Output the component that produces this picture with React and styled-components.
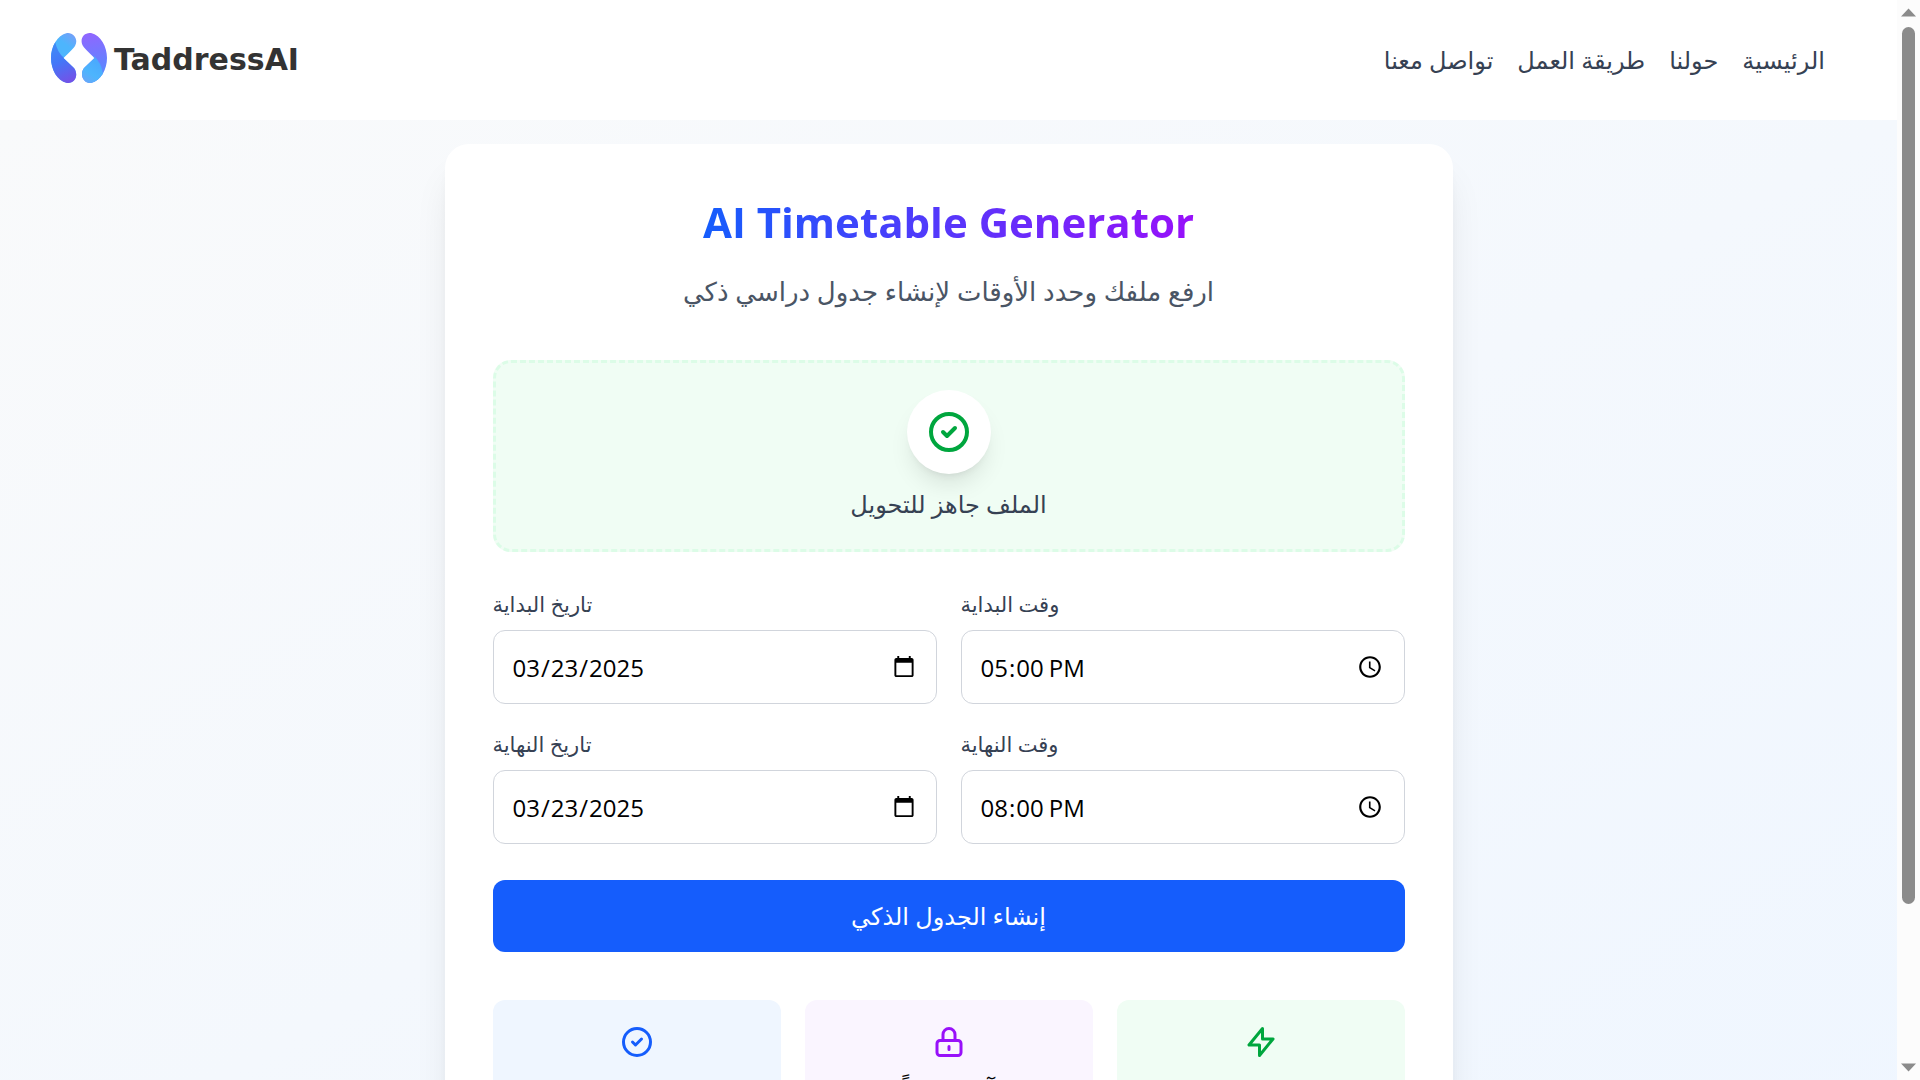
import React from "react";
import styled, { createGlobalStyle } from "styled-components";

const sans = `"Open Sans", "Noto Sans", "DejaVu Sans", sans-serif`;

const GlobalStyle = createGlobalStyle`
  *, *::before, *::after { box-sizing: border-box; }
  body { margin: 0; font-family: ${sans}; color: #000; background: #fff; }
  h1, p { margin: 0; }
`;

const Shell = styled.div`
  display: grid;
  grid-template-columns: minmax(0, 1fr) 23px;
  height: 100vh;
  overflow: hidden;
`;

const Page = styled.div`
  display: flex;
  flex-direction: column;
  min-height: 0;
  overflow: hidden;
`;

const Header = styled.header`
  display: flex;
  flex-shrink: 0;
  align-items: center;
  justify-content: space-between;
  height: 120px;
  padding: 0 72px 0 50px;
  background: #fff;
`;

const Brand = styled.a`
  display: flex;
  align-items: center;
  gap: 6px;
  color: #333;
  font-family: "DejaVu Sans", sans-serif;
  font-size: 30px;
  font-weight: 700;
  line-height: 36px;
  text-decoration: none;
`;

const Nav = styled.nav`
  display: flex;
  gap: 24px;
`;

const NavLink = styled.a`
  color: #364153;
  font-size: 24px;
  line-height: 38px;
  text-decoration: none;
`;

const Main = styled.main`
  flex: 1 0 auto;
  padding: 24px;
  background: linear-gradient(to bottom right, #f9fafb, #eff6ff);
`;

const Card = styled.section`
  max-width: 1008px;
  margin: 0 auto;
  padding: 48px;
  border-radius: 24px;
  background: #fff;
  box-shadow: 0 30px 38px -8px rgba(0, 0, 0, 0.1), 0 12px 15px -9px rgba(0, 0, 0, 0.1);
`;

const Intro = styled.div`
  display: flex;
  flex-direction: column;
  align-items: center;
  gap: 18px;
  margin-bottom: 48px;
`;

const Title = styled.h1`
  font-size: 42px;
  font-weight: 700;
  line-height: 60px;
  color: transparent;
  background: linear-gradient(to right, #155dfc, #9810fa);
  background-clip: text;
`;

const Subtitle = styled.p`
  color: #4a5565;
  font-size: 26px;
  line-height: 42px;
`;

const Form = styled.form`
  display: flex;
  flex-direction: column;
  gap: 36px;
`;

const DropArea = styled.div`
  display: flex;
  flex-direction: column;
  align-items: center;
  gap: 12px;
  padding: 27px;
  border: 3px dashed #dcfce7;
  border-radius: 18px;
  background: #f0fdf4;
  color: #364153;
  font-size: 24px;
  line-height: 36px;
`;

const Disc = styled.span`
  display: flex;
  padding: 18px;
  border-radius: 50%;
  background: #fff;
  color: #00a63e;
  box-shadow: 0 15px 23px -5px rgba(0, 0, 0, 0.1), 0 6px 9px -6px rgba(0, 0, 0, 0.1);
`;

const Fields = styled.div`
  display: grid;
  grid-template-columns: 1fr 1fr;
  gap: 24px;
`;

const Field = styled.div`
  display: flex;
  flex-direction: column;
  gap: 10px;
`;

const Label = styled.label`
  color: #364153;
  font-size: 21px;
  line-height: 32px;
`;

const Input = styled.input`
  width: 100%;
  height: 74px;
  padding: 0 18px;
  border: 1px solid #d1d5dc;
  border-radius: 12px;
  background: #fff;
  color: #000;
  font-family: ${sans};
  font-size: 24px;
`;

const Submit = styled.button`
  height: 72px;
  border: 0;
  border-radius: 12px;
  background: #155dfc;
  color: #fff;
  font-family: ${sans};
  font-size: 24px;
  font-weight: 400;
  line-height: 36px;
`;

const Features = styled.div`
  display: grid;
  grid-template-columns: repeat(3, 1fr);
  gap: 24px;
  margin-top: 48px;
`;

const Feature = styled.article`
  display: flex;
  flex-direction: column;
  align-items: center;
  gap: 12px;
  padding: 24px;
  border-radius: 12px;
  background: ${(p) => p.$tint};
  font-size: 24px;
  line-height: 36px;

  svg { color: ${(p) => p.$tone}; }
`;

const ScrollRail = styled.div`
  display: flex;
  flex-direction: column;
  align-items: center;
  justify-content: space-between;
  gap: 10px;
  padding: 8px 0;
  background: #fcfcfc;
`;

const ScrollTrack = styled.div`
  flex: 1;
`;

const ScrollThumb = styled.div`
  width: 13px;
  height: 85.5%;
  border-radius: 7px;
  background: #8b8b8b;
`;

const Glyph = ({ size, d, w = 2 }) => (
  <svg width={size} height={size} viewBox="0 0 24 24" fill="none" stroke="currentColor" strokeWidth={w} strokeLinecap="round" strokeLinejoin="round" aria-hidden="true">
    <path d={d} />
  </svg>
);

const CHECK = "M9 12l2 2 4-4m6 2a9 9 0 11-18 0 9 9 0 0118 0z";
const LOCK = "M12 15v2m-6 4h12a2 2 0 002-2v-6a2 2 0 00-2-2H6a2 2 0 00-2 2v6a2 2 0 002 2zm10-10V7a4 4 0 00-8 0v4h8z";
const BOLT = "M13 10V3L4 14h7v7l9-11h-7z";

const Arrow = ({ up }) => (
  <svg width="15" height="9" viewBox="0 0 15 9" aria-hidden="true">
    <path d={up ? "M0 8.500L7.500 0.500L15 8.500Z" : "M0 0.500H15L7.500 8.500Z"} fill="#8b8b8b" />
  </svg>
);

const Logo = () => (
  <svg width="58" height="56" viewBox="0 0 58 56" aria-hidden="true">
    <defs>
      <linearGradient id="la" x1="0.8" y1="0" x2="0.4" y2="1">
        <stop offset="0" stopColor="#7a9df8" />
        <stop offset="0.3" stopColor="#4db5fd" />
        <stop offset="1" stopColor="#4db5fd" />
      </linearGradient>
      <linearGradient id="lb" x1="0.3" y1="0" x2="0.6" y2="1">
        <stop offset="0" stopColor="#3f8cf6" />
        <stop offset="0.45" stopColor="#4377f8" />
        <stop offset="1" stopColor="#7650e6" />
      </linearGradient>
      <linearGradient id="lc" x1="0.5" y1="0" x2="0.6" y2="1">
        <stop offset="0" stopColor="#9166ff" />
        <stop offset="0.6" stopColor="#6680ff" />
        <stop offset="1" stopColor="#548fff" />
      </linearGradient>
      <linearGradient id="ld" x1="0.8" y1="0" x2="0.2" y2="1">
        <stop offset="0" stopColor="#4aa5fd" />
        <stop offset="0.6" stopColor="#4db5fd" />
        <stop offset="1" stopColor="#6ea4f8" />
      </linearGradient>
      <clipPath id="left"><path d="M17 1C23 0 29 7 25 14Q24 16 13.500 26L24 36C29 43 25 52 17 51C7 49 1 37 1 26S7 3 17 1Z" /></clipPath>
      <clipPath id="right"><path d="M41 1C34 0 29 7 33 14Q34 16 44.500 26L34 36C29 43 34 52 41 51C51 49 57 37 57 26S51 3 41 1Z" /></clipPath>
    </defs>
    <g clipPath="url(#left)">
      <rect width="29" height="52" fill="url(#la)" />
      <path d="M5 9Q7 20 14 26L29 40V52H0V9Z" fill="url(#lb)" />
    </g>
    <g clipPath="url(#right)">
      <rect x="29" width="29" height="52" fill="url(#lc)" />
      <path d="M44 24Q51 30 53 42V52H29V40Z" fill="url(#ld)" />
    </g>
  </svg>
);

const links = ["الرئيسية", "حولنا", "طريقة العمل", "تواصل معنا"];

const fields = [
  { id: "start-date", label: "تاريخ البداية", type: "date", value: "2025-03-23" },
  { id: "start-time", label: "وقت البداية", type: "time", value: "17:00" },
  { id: "end-date", label: "تاريخ النهاية", type: "date", value: "2025-03-23" },
  { id: "end-time", label: "وقت النهاية", type: "time", value: "20:00" },
];

const features = [
  { text: "دقة عالية", icon: CHECK, tint: "#eff6ff", tone: "#155dfc" },
  { text: "آمن تماماً", icon: LOCK, tint: "#faf5ff", tone: "#9810fa" },
  { text: "سريع وفعال", icon: BOLT, tint: "#f0fdf4", tone: "#00a63e" },
];

export default function App() {
  return (
    <>
      <GlobalStyle />
      <Shell>
        <Page>
          <Header>
            <Brand href="#home"><Logo />TaddressAI</Brand>
            <Nav dir="rtl">
              {links.map((text) => <NavLink href="#" key={text}>{text}</NavLink>)}
            </Nav>
          </Header>
          <Main>
            <Card>
              <Intro>
                <Title>AI Timetable Generator</Title>
                <Subtitle dir="rtl">ارفع ملفك وحدد الأوقات لإنشاء جدول دراسي ذكي</Subtitle>
              </Intro>
              <Form onSubmit={(e) => e.preventDefault()}>
                <DropArea>
                  <Disc><Glyph size={48} d={CHECK} /></Disc>
                  <p dir="rtl">الملف جاهز للتحويل</p>
                </DropArea>
                <Fields>
                  {fields.map((f) => (
                    <Field key={f.id}>
                      <Label htmlFor={f.id}>{f.label}</Label>
                      <Input id={f.id} type={f.type} defaultValue={f.value} />
                    </Field>
                  ))}
                </Fields>
                <Submit type="submit">إنشاء الجدول الذكي</Submit>
              </Form>
              <Features>
                {features.map((f) => (
                  <Feature key={f.text} $tint={f.tint} $tone={f.tone}>
                    <Glyph size={36} d={f.icon} />
                    <p dir="rtl">{f.text}</p>
                  </Feature>
                ))}
              </Features>
            </Card>
          </Main>
        </Page>
        <ScrollRail aria-hidden="true">
          <Arrow up />
          <ScrollTrack><ScrollThumb /></ScrollTrack>
          <Arrow />
        </ScrollRail>
      </Shell>
    </>
  );
}
